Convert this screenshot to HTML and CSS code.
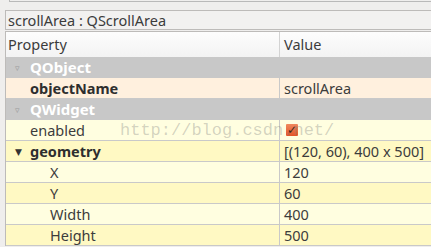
FILE: index.html
```
<!DOCTYPE html>
<html>
<head>
    <title>Property Editor</title>
    <link rel="stylesheet" href="styles.css">
</head>
<body>
    <div class="top-edge"></div>
    <div class="panel">
        <div class="title">scrollArea : QScrollArea</div>
        <div class="tree">
            <div class="head">
                <div class="name">Property</div>
                <div class="value">Value</div>
            </div>

            <div class="row group">
                <span class="arrow open">&#9663;</span>QObject
            </div>
            <div class="row peach">
                <div class="name bold">objectName</div>
                <div class="value">scrollArea</div>
            </div>

            <div class="row group">
                <span class="arrow open">&#9663;</span>QWidget
            </div>
            <div class="row pale">
                <div class="name">enabled</div>
                <div class="value"><span class="check">&#10003;</span></div>
            </div>
            <div class="row yellow">
                <div class="name bold"><span class="arrow dark">&#9660;</span>geometry</div>
                <div class="value">[(120, 60), 400 x 500]</div>
            </div>
            <div class="row pale">
                <div class="name sub">X</div>
                <div class="value">120</div>
            </div>
            <div class="row yellow">
                <div class="name sub">Y</div>
                <div class="value">60</div>
            </div>
            <div class="row pale">
                <div class="name sub">Width</div>
                <div class="value">400</div>
            </div>
            <div class="row yellow">
                <div class="name sub">Height</div>
                <div class="value">500</div>
            </div>
        </div>
    </div>

    <div class="watermark">http://blog.csdn.net/</div>
</body>
</html>
```

FILE: styles.css
```
body {
    margin: 0;
    background: #efeeed;
    font-family: "Noto Sans", "DejaVu Sans", sans-serif;
    font-size: 14.5px;
    color: #3c3c3c;
    overflow: hidden;
}

.top-edge {
    height: 1px;
    margin-left: 9px;
    border-left: 1px solid #b9b9b9;
    border-bottom: 1px solid #b9b9b9;
}

.panel {
    margin-left: 5px;
}

.title {
    margin-top: 8px;
    height: 18px;
    line-height: 19px;
    padding-left: 2px;
    border: 1px solid #bdbbb9;
    border-right: none;
    background: #f2f1f0;
}

.tree {
    margin-top: 1px;
    border-left: 1px solid #bdbbb9;
    border-top: 1px solid #bdbbb9;
}

.head {
    display: flex;
    height: 25px;
    line-height: 25px;
    background: linear-gradient(#fdfdfd, #f3f3f3);
}

.head .name {
    width: 271px;
    padding-left: 2px;
    border-right: 1px solid #d3d3d3;
}

.head .value {
    padding-left: 4px;
}

.row {
    display: flex;
    height: 20px;
    line-height: 21px;
    border-bottom: 1px solid #c9c9c9;
}

.row .name {
    width: 249px;
    padding-left: 24px;
    border-right: 1px solid #c9c9c9;
    white-space: nowrap;
}

.row .value {
    padding-left: 4px;
    white-space: nowrap;
}

.group {
    background: #c8c8c8;
    border-bottom-color: #c8c8c8;
    color: #fff;
    font-weight: bold;
    font-size: 15px;
    padding-left: 9px;
}

.peach { background: #fff0de; }
.pale { background: #fffee0; }
.yellow { background: #fff9c3; }

.bold {
    font-weight: bold;
    color: #2e2e2e;
}

.row .sub {
    padding-left: 44px;
    width: 229px;
}

.arrow {
    display: inline-block;
    width: 15px;
    font-size: 9px;
    vertical-align: top;
}

.arrow.open {
    color: #9a9a9a;
}

.arrow.dark {
    color: #333;
    margin-left: -15px;
}

.check {
    display: inline-block;
    width: 12px;
    height: 12px;
    margin-top: 4px;
    margin-left: 2px;
    vertical-align: top;
    background: linear-gradient(#f08a5d, #e2542a);
    border-radius: 1px;
    color: #3a2a20;
    font-size: 12px;
    line-height: 11px;
    text-align: center;
    font-weight: bold;
}

.watermark {
    position: absolute;
    left: 120px;
    top: 121px;
    font-family: "Liberation Mono", monospace;
    font-size: 17px;
    color: rgba(120, 120, 120, 0.32);
    white-space: nowrap;
}
```
